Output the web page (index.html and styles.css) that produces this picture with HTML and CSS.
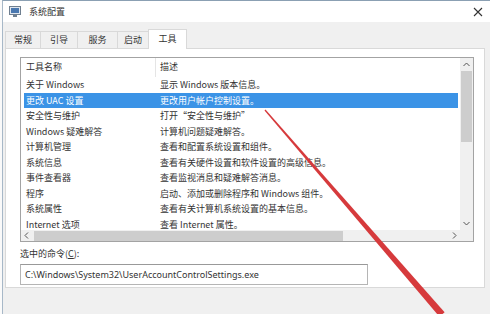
FILE: index.html
```html
<!DOCTYPE html>
<html lang="zh-CN">
<head>
<meta charset="utf-8">
<title>系统配置</title>
<link rel="stylesheet" href="styles.css">
</head>
<body>
<div class="window">
  <div class="titlebar">
    <svg class="app-icon" width="12" height="11" viewBox="0 0 12 11">
      <rect x="0.5" y="0.5" width="11" height="8" fill="#dfe6ee" stroke="#6f7f90"/>
      <rect x="2" y="2" width="8" height="5" fill="#4a78b0"/>
      <rect x="4" y="9" width="4" height="2" fill="#6f7f90"/>
    </svg>
    <span class="title">系统配置</span>
    <svg class="close" width="10" height="10" viewBox="0 0 10 10">
      <path d="M1 1 L9 9 M9 1 L1 9" stroke="#333" stroke-width="1.1" fill="none"/>
    </svg>
  </div>
  <div class="tabs">
    <div class="tab t1">常规</div>
    <div class="tab t2">引导</div>
    <div class="tab t3">服务</div>
    <div class="tab t4">启动</div>
    <div class="tab active">工具</div>
  </div>
  <div class="panel">
    <div class="listbox">
      <div class="content">
        <div class="header">
          <div class="hcell name">工具名称</div>
          <div class="hcell desc">描述</div>
        </div>
        <div class="row"><div class="c1">关于 Windows</div><div class="c2">显示 Windows 版本信息。</div></div>
        <div class="row selected"><div class="c1">更改 UAC 设置</div><div class="c2">更改用户帐户控制设置。</div></div>
        <div class="row"><div class="c1">安全性与维护</div><div class="c2">打开“安全性与维护”</div></div>
        <div class="row"><div class="c1">Windows 疑难解答</div><div class="c2">计算机问题疑难解答。</div></div>
        <div class="row"><div class="c1">计算机管理</div><div class="c2">查看和配置系统设置和组件。</div></div>
        <div class="row"><div class="c1">系统信息</div><div class="c2">查看有关硬件设置和软件设置的高级信息。</div></div>
        <div class="row"><div class="c1">事件查看器</div><div class="c2">查看监视消息和疑难解答消息。</div></div>
        <div class="row"><div class="c1">程序</div><div class="c2">启动、添加或删除程序和 Windows 组件。</div></div>
        <div class="row"><div class="c1">系统属性</div><div class="c2">查看有关计算机系统设置的基本信息。</div></div>
        <div class="row"><div class="c1">Internet 选项</div><div class="c2">查看 Internet 属性。</div></div>
      </div>
      <div class="vscroll">
        <svg class="arrow" width="13" height="13" viewBox="0 0 13 13"><path d="M3.5 8 L6.5 5 L9.5 8" stroke="#555" fill="none"/></svg>
        <div class="vthumb"></div>
        <div class="vtrack"></div>
        <svg class="arrow" width="13" height="13" viewBox="0 0 13 13"><path d="M3.5 5 L6.5 8 L9.5 5" stroke="#555" fill="none"/></svg>
      </div>
      <div class="hscroll">
        <svg class="arrow" width="12" height="11" viewBox="0 0 12 11"><path d="M7 2.5 L4 5.5 L7 8.5" stroke="#555" fill="none"/></svg>
        <div class="hthumb"></div>
        <div class="htrack"></div>
        <svg class="arrow" width="12" height="11" viewBox="0 0 12 11"><path d="M5 2.5 L8 5.5 L5 8.5" stroke="#555" fill="none"/></svg>
      </div>
      <div class="corner"></div>
    </div>
    <div class="cmd-label">选中的命令(<u>C</u>):</div>
    <div class="cmd-box">C:\Windows\System32\UserAccountControlSettings.exe</div>
  </div>
</div>
<svg class="red-arrow" width="490" height="314" viewBox="0 0 490 314">
  <polygon points="265.5,109.6 444.6,312.3 439.4,316.7 264.5,110.4" fill="#d63a3c"/>
</svg>
</body>
</html>
```

FILE: styles.css
```css
html, body {
  margin: 0;
  padding: 0;
}
body {
  width: 490px;
  height: 314px;
  overflow: hidden;
  background: #fafafa;
  font-family: "Noto Sans CJK SC", "Noto Sans", sans-serif;
  font-size: 9px;
  color: #333;
  position: relative;
}
.window {
  margin-left: 2px;
  height: 313px;
  border-left: 1px solid #a7b8c8;
  border-top: 1px solid #8ba0b3;
  background: #f0f0f0;
  display: flex;
  flex-direction: column;
}
.titlebar {
  height: 21px;
  background: #fff;
  display: flex;
  align-items: center;
  padding-left: 6px;
  padding-right: 7px;
}
.app-icon {
  margin-right: 8px;
}
.title {
  font-size: 9px;
  color: #333;
  flex: 1;
}
.tabs {
  display: flex;
  align-items: flex-end;
  height: 19px;
  margin-top: 7px;
  padding-left: 2px;
  position: relative;
  z-index: 1;
}
.tab {
  height: 17px;
  line-height: 16px;
  text-align: center;
  border: 1px solid #d9d9d9;
  border-bottom: none;
  margin-right: -1px;
  background: #f0f0f0;
  box-sizing: border-box;
}
.tab.t1 { width: 36px; }
.tab.t2 { width: 38px; }
.tab.t3 { width: 41px; }
.tab.t4 { width: 32px; }
.tab.active {
  width: 39px;
  height: 20px;
  margin: 0 0 -1px 0;
  background: #fff;
  line-height: 18px;
}
.panel {
  margin-left: 2px;
  width: 480px;
  height: 240px;
  box-sizing: border-box;
  border: 1px solid #d9d9d9;
  background: #fff;
  padding: 8px 0 0 14px;
}
.listbox {
  width: 454px;
  height: 185px;
  box-sizing: border-box;
  border: 1px solid #a3a3a3;
  display: grid;
  grid-template-columns: 439px 13px;
  grid-template-rows: 172px 11px;
}
.content {
  overflow: hidden;
  background: #fff;
}
.header {
  height: 19px;
  display: flex;
  line-height: 17px;
}
.hcell.name {
  width: 129px;
  padding-left: 5px;
  border-right: 1px solid #e5e5e5;
}
.hcell.desc {
  padding-left: 4px;
}
.row {
  height: 15.5px;
  line-height: 15px;
  display: flex;
  margin: 0 2px 0 3px;
  white-space: nowrap;
}
.row .c1 {
  width: 134px;
  padding-left: 2px;
  flex: none;
}
.row.selected {
  background: #3b93e6;
  color: #fff;
}
.vscroll {
  background: #f0f0f0;
  display: flex;
  flex-direction: column;
}
.vthumb {
  height: 71px;
  margin: 0 1px;
  background: #cdcdcd;
}
.vtrack {
  flex: 1;
}
.hscroll {
  background: #f0f0f0;
  display: flex;
  align-items: center;
}
.hthumb {
  width: 309px;
  height: 10px;
  margin-left: 1px;
  background: #cdcdcd;
}
.htrack {
  flex: 1;
}
.corner {
  background: #f0f0f0;
}
.cmd-label {
  margin-top: 4px;
  height: 16px;
  line-height: 16px;
}
.cmd-box {
  margin-top: 2px;
  width: 348px;
  height: 21px;
  box-sizing: border-box;
  border: 1px solid #b5b5b5;
  border-top-color: #999;
  line-height: 19px;
  padding-left: 4px;
  font-family: "Noto Sans", "Noto Sans CJK SC", sans-serif;
  font-size: 9px;
  white-space: nowrap;
  overflow: hidden;
}
.red-arrow {
  position: absolute;
  left: 0;
  top: 0;
  pointer-events: none;
}
```
